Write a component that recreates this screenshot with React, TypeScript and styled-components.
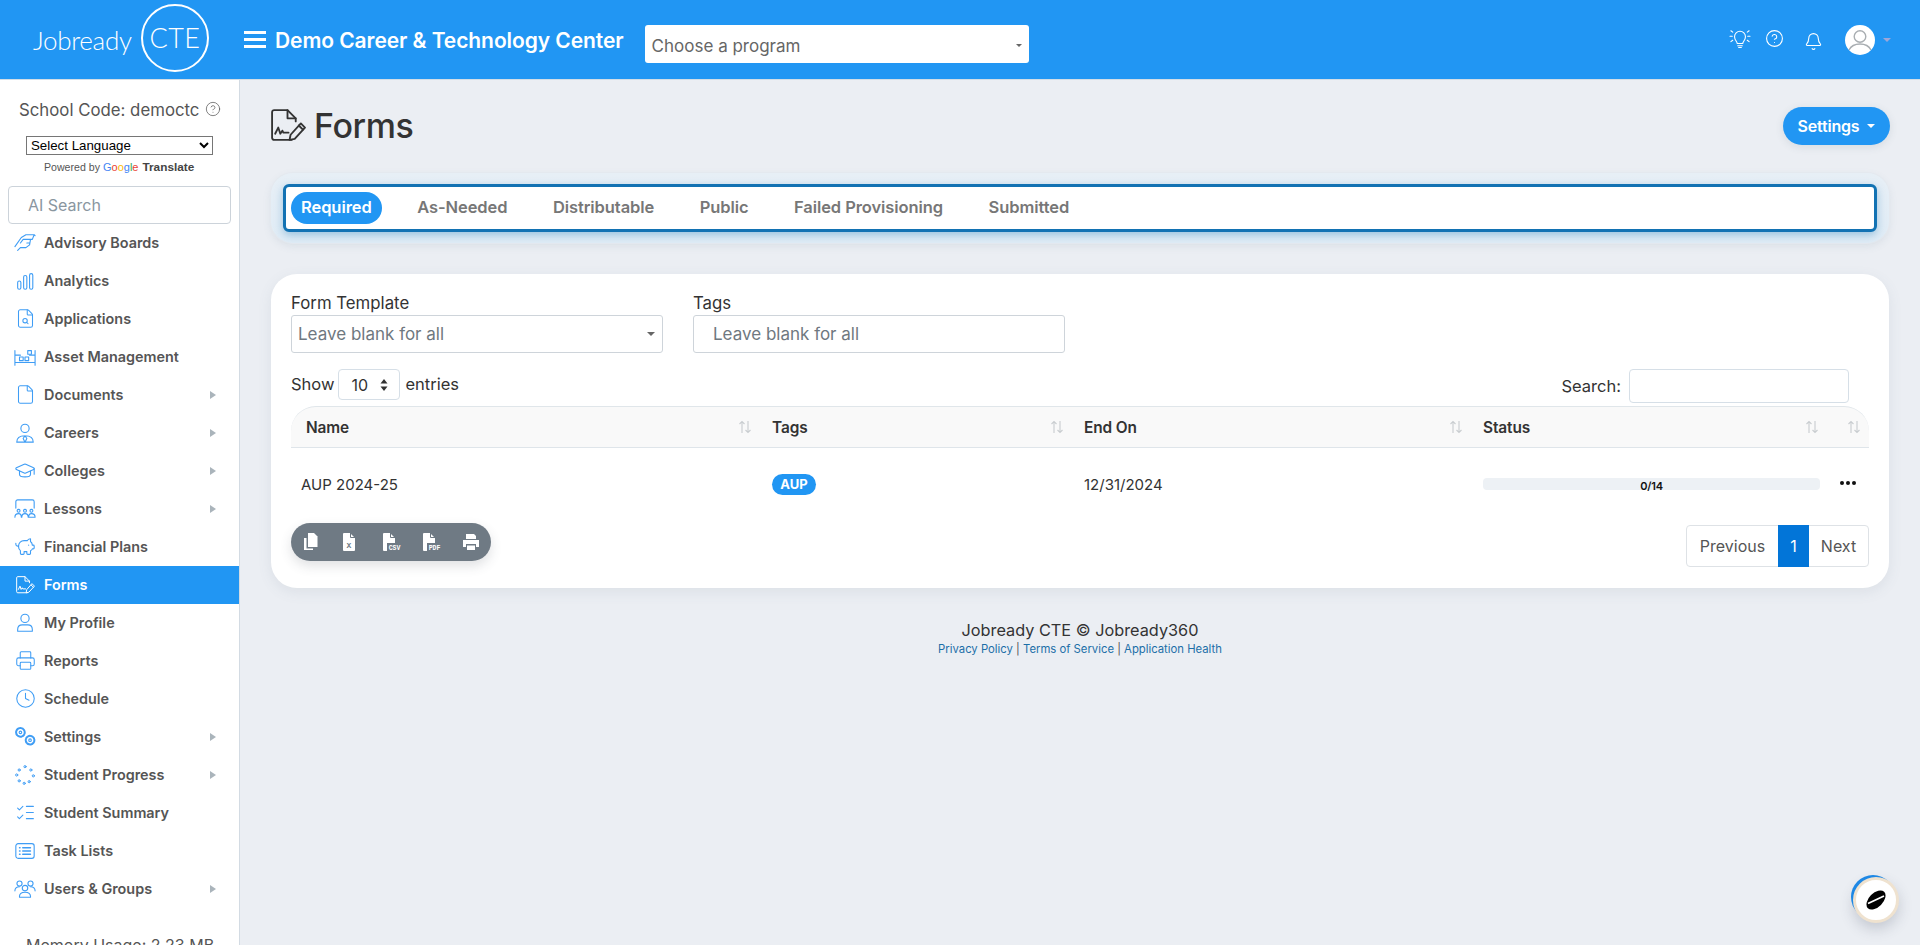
import React from 'react';
import styled, { createGlobalStyle } from 'styled-components';
import { Bell, CircleHelp, Clock, File, GraduationCap, PiggyBank, Printer, ListChecks, FileSearch } from 'lucide-react';

const FONT = '"Inter", "Open Sans", "Liberation Sans", sans-serif';
const BLUE = '#2196f3';
const ICON_BLUE = '#3f9df5';

const Global = createGlobalStyle`
  * { box-sizing: border-box; }
  html, body { margin: 0; height: 945px; overflow: hidden; }
  body { background: #ebeef3; font-family: ${FONT}; color: #333; }
`;

const Header = styled.header`
  height: 80px;
  background: ${BLUE};
  border-bottom: 1px solid #d3dde6;
  display: flex;
  align-items: center;
  padding: 0 29px 0 33px;
`;

const Logo = styled.div`
  display: flex;
  align-items: center;
  justify-content: space-between;
  color: #fff;
  font-family: "Lato", sans-serif;
  font-weight: 300;
  font-size: 26px;
  letter-spacing: -0.3px;
  width: 176px;
`;

const LogoRing = styled.div`
  width: 68px;
  height: 68px;
  flex: none;
  margin-top: -4px;
  border: 2px solid #fff;
  border-radius: 50%;
  display: flex;
  align-items: center;
  justify-content: center;
  font-size: 27px;
  letter-spacing: 0.5px;
`;

const Burger = styled.div`
  width: 22px;
  margin-left: 35px;
  margin-right: 9px;
  display: flex;
  flex-direction: column;
  gap: 4px;
  span { display: block; height: 3px; background: #fff; }
`;

const SchoolTitle = styled.div`
  flex: 0 0 347px;
  color: #fff;
  font-size: 21px;
  font-weight: 600;
  letter-spacing: -0.07px;
  white-space: nowrap;
  margin-top: 2px;
`;

const ProgramSelect = styled.div`
  margin: 8px 0 0 21px;
  width: 384px;
  height: 38px;
  background: #fff;
  border-radius: 3px;
  display: flex;
  align-items: center;
  justify-content: space-between;
  padding: 4px 7px 0 7px;
  color: #666;
  font-size: 17px;
`;

const Caret = styled.i<{ $color?: string; $size?: number }>`
  display: block;
  flex: none;
  width: 0;
  height: 0;
  border-left: ${p => p.$size ?? 4}px solid transparent;
  border-right: ${p => p.$size ?? 4}px solid transparent;
  border-top: ${p => p.$size ?? 4}px solid ${p => p.$color ?? '#666'};
`;

const HeaderTools = styled.div`
  margin-left: auto;
  display: flex;
  align-items: center;
  color: #fff;
`;

const ToolSlot = styled.div<{ $w: number; $dy?: number }>`
  width: ${p => p.$w}px;
  display: flex;
  justify-content: center;
  margin-top: ${p => p.$dy ?? 0}px;
`;

const Avatar = styled.div`
  width: 30px;
  height: 30px;
  border-radius: 50%;
  background: #fff;
  overflow: hidden;
  margin-left: 10px;
  margin-right: 8px;
`;

const Body = styled.div`
  display: flex;
  height: 865px;
`;

const Sidebar = styled.aside`
  width: 240px;
  flex: none;
  background: #fff;
  border-right: 1px solid #d3dbe3;
  overflow: hidden;
`;

const SchoolCode = styled.div`
  height: 56px;
  padding: 16px 0 0 19px;
  display: flex;
  align-items: flex-start;
  gap: 6px;
  color: #555;
  font-size: 16.8px;
  line-height: 28px;
  white-space: nowrap;
  svg { margin-top: 5px; }
`;

const LanguageWrap = styled.div`
  text-align: center;
  font-family: "Liberation Sans", sans-serif;
  select {
    display: block;
    width: 187px;
    height: 19px;
    margin: 0 0 0 26px;
    font-family: "Liberation Sans", sans-serif;
    font-size: 13.3px;
    background: #fff;
    color: #000;
    padding: 0;
  }
`;

const Powered = styled.div`
  margin-top: 4px;
  height: 16px;
  padding-left: 44px;
  display: flex;
  gap: 3px;
  align-items: center;
  font-size: 10.6px;
  color: #555;
  b { color: #444; font-size: 11.8px; margin-left: 1px; }
`;

const G = styled.span<{ $c: string }>`
  color: ${p => p.$c};
  font-weight: 400;
  font-size: 11px;
`;

const AiSearch = styled.div`
  margin: 11px 8px 0 8px;
  height: 38px;
  border: 1px solid #ccd3da;
  border-radius: 4px;
  display: flex;
  align-items: center;
  padding-left: 19px;
  color: #8a969f;
  font-size: 16px;
`;

const NavItem = styled.div<{ $active?: boolean }>`
  height: 38px;
  display: flex;
  align-items: center;
  padding: 0 23px 1px 14px;
  background: ${p => (p.$active ? BLUE : 'transparent')};
  color: ${p => (p.$active ? '#fff' : '#555')};
  font-size: 14.4px;
  font-weight: 600;
  letter-spacing: 0;
`;

const NavIcon = styled.span`
  width: 22px;
  height: 22px;
  margin-right: 8px;
  display: flex;
  align-items: center;
  justify-content: center;
  flex: none;
`;

const SubArrow = styled.i`
  margin-left: auto;
  border-top: 4px solid transparent;
  border-bottom: 4px solid transparent;
  border-left: 6px solid #aab4bb;
`;

const Memory = styled.div`
  margin-top: 27px;
  padding-left: 26px;
  font-size: 16px;
  color: #555;
  white-space: nowrap;
`;

const Main = styled.main`
  flex: 1;
  padding: 0 31px;
`;

const PageHead = styled.div`
  height: 93px;
  display: flex;
  align-items: center;
  justify-content: space-between;
`;

const PageTitle = styled.h1`
  margin: -3px 0 0 -2px;
  display: flex;
  align-items: center;
  gap: 8px;
  font-size: 34px;
  font-weight: 500;
  letter-spacing: -0.4px;
  color: #333;
`;

const SettingsBtn = styled.button`
  width: 107px;
  height: 38px;
  margin: 0 -1px 1px 0;
  border: 0;
  border-radius: 19px;
  background: ${BLUE};
  color: #fff;
  font-family: ${FONT};
  font-size: 16px;
  font-weight: 600;
  letter-spacing: -0.2px;
  display: flex;
  align-items: center;
  justify-content: center;
  gap: 8px;
  box-shadow: 0 2px 8px rgba(60, 80, 100, .12);
`;

const TabsOuter = styled.div`
  height: 70px;
  padding: 11px 12px;
  background: linear-gradient(#e7eff6, #e0ecf6);
  border-radius: 22px;
  box-shadow: 0 0 0 1px #e4e9ef, 0 3px 8px rgba(90, 120, 150, .12);
`;

const TabsInner = styled.div`
  height: 48px;
  background: #fff;
  border: 3px solid #1272b3;
  border-radius: 6px;
  box-shadow: 0 3px 9px rgba(18, 114, 179, .35);
  display: flex;
  align-items: center;
  padding-left: 5px;
  gap: 25.5px;
`;

const Tab = styled.div<{ $active?: boolean }>`
  height: 32px;
  padding: 0 10px 2px;
  border-radius: 16px;
  background: ${p => (p.$active ? BLUE : 'transparent')};
  color: ${p => (p.$active ? '#fff' : '#777')};
  font-size: 16.5px;
  font-weight: 600;
  letter-spacing: -0.08px;
  display: flex;
  align-items: center;
`;

const Card = styled.section`
  margin-top: 31px;
  height: 314px;
  background: #fff;
  border-radius: 26px;
  padding: 18px 20px 0;
  box-shadow: 0 4px 14px rgba(90, 110, 130, .1);
`;

const Filters = styled.div`
  display: flex;
  gap: 30px;
`;

const Field = styled.div`
  width: 372px;
  label {
    display: block;
    height: 23px;
    font-size: 16.8px;
    line-height: 22px;
    color: #333;
  }
`;

const FieldBox = styled.div<{ $indent: number }>`
  height: 38px;
  border: 1px solid #ced4da;
  border-radius: 3px;
  display: flex;
  align-items: center;
  justify-content: space-between;
  padding: 0 7px 0 ${p => p.$indent}px;
  color: #6f7880;
  font-size: 17px;
`;

const Controls = styled.div`
  margin-top: 16px;
  height: 37px;
  display: flex;
  justify-content: space-between;
  align-items: flex-start;
  font-size: 16.5px;
  color: #333;
`;

const ShowEntries = styled.div`
  display: flex;
  align-items: center;
  gap: 4px;
  height: 30px;
`;

const EntrySelect = styled.div`
  width: 62px;
  height: 31px;
  border: 1px solid #d6dfe7;
  border-radius: 4px;
  display: flex;
  align-items: center;
  justify-content: space-between;
  padding: 2px 11px 0 12px;
  margin: 0 1px 0 0;
  font-size: 16px;
`;

const SearchBlock = styled.div`
  display: flex;
  align-items: center;
  gap: 8px;
  margin-right: 20px;
`;

const SearchInput = styled.div`
  width: 220px;
  height: 34px;
  border: 1px solid #d6dfe7;
  border-radius: 4px;
`;

const Table = styled.table`
  width: 1578px;
  table-layout: fixed;
  border-collapse: separate;
  border-spacing: 0;
`;

const Th = styled.th<{ $w: number; $first?: boolean; $last?: boolean }>`
  width: ${p => p.$w}px;
  height: 42px;
  padding: 0 ${p => (p.$last ? 8 : 10)}px 0 ${p => (p.$first ? 15 : 10)}px;
  background: #f9f9f9;
  border-top: 1px solid #e0e6ea;
  border-bottom: 1px solid #dfe5ea;
  border-radius: ${p => (p.$first ? '25px 0 0 0' : p.$last ? '0 25px 0 0' : '0')};
  text-align: left;
  font-size: 15.4px;
  font-weight: 600;
  letter-spacing: -0.1px;
  color: #333;
`;

const ThInner = styled.div`
  display: flex;
  justify-content: space-between;
  align-items: center;
`;

const Td = styled.td`
  height: 75px;
  padding: 0 10px 3px;
  font-size: 15px;
  color: #333;
`;

const Badge = styled.span`
  display: inline-block;
  width: 44px;
  height: 21px;
  line-height: 21px;
  border-radius: 11px;
  background: ${BLUE};
  color: #fff;
  text-align: center;
  font-size: 13px;
  font-weight: 700;
`;

const Progress = styled.div`
  width: 337px;
  height: 12px;
  border-radius: 4px;
  background: #edf1f5;
  color: #111;
  font-size: 11px;
  font-weight: 600;
  line-height: 16px;
  letter-spacing: -0.2px;
  text-align: center;
`;

const Dots = styled.div`
  display: flex;
  gap: 2px;
  justify-content: center;
  margin: -3px 0 0 -3px;
  i { width: 4px; height: 4px; border-radius: 50%; background: #111; }
`;

const BelowTable = styled.div`
  display: flex;
  justify-content: space-between;
  align-items: flex-start;
`;

const ExportBar = styled.div`
  width: 200px;
  height: 38px;
  border-radius: 19px;
  background: #6f7a84;
  box-shadow: 0 5px 12px rgba(60, 70, 80, .16);
  display: flex;
  align-items: center;
`;

const ExportBtn = styled.div`
  width: 40px;
  display: flex;
  justify-content: center;
`;

const Pagination = styled.div`
  margin-top: 2px;
  height: 42px;
  display: flex;
  border: 1px solid #dee2e6;
  border-radius: 4px;
  font-size: 16px;
  color: #555;
`;

const PageCell = styled.div<{ $w: number; $active?: boolean }>`
  width: ${p => p.$w}px;
  display: flex;
  align-items: center;
  justify-content: center;
  margin: ${p => (p.$active ? '-1px 0' : '0')};
  background: ${p => (p.$active ? '#0275d8' : 'transparent')};
  color: ${p => (p.$active ? '#fff' : 'inherit')};
`;

const Footer = styled.footer`
  margin-top: 30px;
  text-align: center;
  font-size: 16.3px;
  color: #333;
  line-height: 24px;
`;

const FooterLinks = styled.div`
  font-size: 11.3px;
  line-height: 14px;
  color: #555;
  a { color: #1c6fa8; text-decoration: none; }
`;

const Launcher = styled.div`
  position: fixed;
  left: 1853px;
  top: 877px;
  width: 46px;
  height: 46px;
  border-radius: 50%;
  background: #fff;
  border: 3px solid #efe2cf;
  display: flex;
  align-items: center;
  justify-content: center;
  box-shadow: -3px -3px 0 -1px #1e88e5, 0 6px 14px rgba(60, 70, 90, .22);
`;

const Svg = ({ children, w = 22, h = 22, vb = '0 0 24 24', sw = 1.2, color = ICON_BLUE }: any) => (
  <svg width={w} height={h} viewBox={vb} fill="none" stroke={color} strokeWidth={sw} strokeLinecap="round" strokeLinejoin="round">
    {children}
  </svg>
);

const FormsIcon = ({ color, size }: { color: string; size: number }) => (
  <svg width={size} height={size} viewBox="0 0 36 36" fill="none" stroke={color} strokeWidth="1.8" strokeLinecap="round" strokeLinejoin="round">
    <path d="M22 32H5a2 2 0 0 1-2-2V5a2 2 0 0 1 2-2h13l8 8v3" />
    <path d="M18 3v8h8" />
    <path d="M6 26l3-6 2 6 2-3 1 2h5" />
    <path d="M21 27l-1 5 5-1 10-11-4-4z" />
    <path d="M29 18l4 4" />
  </svg>
);

const iconAdvisory = <Svg w={23} h={22}><path d="M1 16l7-10M8 6l5-3h9l-2 5h-6M7 12l3-4h8l-1 6-4 3H7l-3 3M14 12h3M22 3l1 1" /></Svg>;
const iconAnalytics = <Svg><rect x="4" y="12" width="3.5" height="9" rx="1.7" /><rect x="10.5" y="6" width="3.5" height="15" rx="1.7" /><rect x="17" y="4" width="3.5" height="17" rx="1.7" /></Svg>;
const iconAsset = <Svg w={23} h={22}><path d="M1 5v16M23 5v16M1 10h6M17 10h6M1 18h22" /><rect x="15" y="5" width="4" height="4" /><rect x="6" y="12" width="4" height="4" /><rect x="12" y="12" width="4" height="4" /></Svg>;
const iconCareers = <Svg><circle cx="12" cy="7" r="4.5" /><path d="M3 22c0-5 3-7 9-7s9 2 9 7zM12 15l-2 3 2 4 2-4z" /></Svg>;
const iconLessons = <Svg w={23} h={22}><path d="M2 11V4a2 2 0 0 1 2-2h16a2 2 0 0 1 2 2v7" /><circle cx="5" cy="14" r="1.6" /><circle cx="12" cy="14" r="1.6" /><circle cx="19" cy="14" r="1.6" /><path d="M1 21c0-3 1.5-4 4-4s3 1 3 4M8.500 21c0-3 1-4 3.500-4s3.500 1 3.500 4M16 21c0-3 1-4 3-4s4 1 4 4z" /></Svg>;
const iconProfile = <Svg><circle cx="12" cy="7" r="4.5" /><path d="M4 21v-2c0-3 2-5 5-5h6c3 0 5 2 5 5v2z" /></Svg>;
const iconGears = <Svg w={23} h={23}><circle cx="7" cy="7.500" r="4.700" strokeDasharray="1.800 1" strokeWidth="2.200" /><circle cx="7" cy="7.500" r="1.400" /><circle cx="17.500" cy="16" r="4.700" strokeDasharray="1.800 1" strokeWidth="2.200" /><circle cx="17.500" cy="16" r="1.400" /></Svg>;
const iconProgress = (
  <Svg w={20} h={20}>
    {[[12, 2], [19, 6], [22, 13], [17, 20], [11, 22], [5, 19], [2, 12], [5, 6]].map(([x, y]) => (
      <circle key={`${x}-${y}`} cx={x} cy={y} r="1.300" />
    ))}
  </Svg>
);
const iconTasks = <Svg w={22} h={22}><rect x="2" y="4" width="20" height="16" rx="2.500" /><path d="M6 8.500h.6M6 12h.6M6 15.500h.6M9.500 8.500H18M9.500 12H18M9.500 15.500H18" strokeWidth="1.500" /></Svg>;
const iconUsers = <Svg w={23} h={22}><circle cx="6" cy="6" r="2.800" /><circle cx="18" cy="6" r="2.800" /><circle cx="12" cy="11" r="3" /><path d="M1 14c0-3 2-4.500 5-4.500M23 14c0-3-2-4.500-5-4.500M6 21v-1c0-3 2.500-4.500 6-4.500s6 1.500 6 4.500v1z" /></Svg>;

const nav = [
  { label: 'Advisory Boards', icon: iconAdvisory },
  { label: 'Analytics', icon: iconAnalytics },
  { label: 'Applications', icon: <FileSearch size={21} color={ICON_BLUE} strokeWidth={1.2} /> },
  { label: 'Asset Management', icon: iconAsset },
  { label: 'Documents', icon: <File size={21} color={ICON_BLUE} strokeWidth={1.2} />, sub: true },
  { label: 'Careers', icon: iconCareers, sub: true },
  { label: 'Colleges', icon: <GraduationCap size={23} color={ICON_BLUE} strokeWidth={1.2} />, sub: true },
  { label: 'Lessons', icon: iconLessons, sub: true },
  { label: 'Financial Plans', icon: <PiggyBank size={22} color={ICON_BLUE} strokeWidth={1.2} /> },
  { label: 'Forms', icon: <FormsIcon color="#fff" size={20} />, active: true },
  { label: 'My Profile', icon: iconProfile },
  { label: 'Reports', icon: <Printer size={21} color={ICON_BLUE} strokeWidth={1.2} /> },
  { label: 'Schedule', icon: <Clock size={21} color={ICON_BLUE} strokeWidth={1.2} /> },
  { label: 'Settings', icon: iconGears, sub: true },
  { label: 'Student Progress', icon: iconProgress, sub: true },
  { label: 'Student Summary', icon: <ListChecks size={21} color={ICON_BLUE} strokeWidth={1.2} /> },
  { label: 'Task Lists', icon: iconTasks },
  { label: 'Users & Groups', icon: iconUsers, sub: true },
];

const tabs = ['Required', 'As-Needed', 'Distributable', 'Public', 'Failed Provisioning', 'Submitted'];

const SortIcon = () => (
  <svg width="14" height="14" viewBox="0 0 14 14" fill="none" stroke="#c9cdd0" strokeWidth="1.1">
    <path d="M4 13V1.500M1.500 4L4 1.500 6.500 4M10 1v11.500M7.500 10l2.500 2.500 2.500-2.500" />
  </svg>
);

const FileGlyph = ({ label }: { label: string }) => {
  const wide = label.length > 1;
  return (
    <svg width="22" height="18" viewBox="0 0 22 18">
      <path d="M4 0h6l5 5v12a1 1 0 0 1-1 1H4a1 1 0 0 1-1-1V1a1 1 0 0 1 1-1z" fill="#fff" />
      <path d="M10.500 0v4.500H15" fill="none" stroke="#6f7a84" strokeWidth="1" />
      {wide && <rect x="7" y="10" width="15" height="8" fill="#6f7a84" />}
      <text
        x={wide ? 14.5 : 9}
        y={wide ? 16.5 : 15}
        textAnchor="middle"
        fontSize={wide ? 6.5 : 8}
        fontWeight="700"
        fontFamily="Liberation Mono, monospace"
        fill={wide ? '#fff' : '#6f7a84'}
      >
        {label}
      </text>
    </svg>
  );
};

const exportIcons = [
  <svg key="copy" width="18" height="18" viewBox="0 0 18 18" fill="#fff"><path d="M6 0h6l3.500 3.500V14H6z" /><path d="M2 5h2.500v10.500H11V17H2z" /></svg>,
  <FileGlyph key="x" label="X" />,
  <FileGlyph key="csv" label="CSV" />,
  <FileGlyph key="pdf" label="PDF" />,
  <svg key="print" width="18" height="18" viewBox="0 0 18 18" fill="#fff"><path d="M4 1h8l2 2v3H4z" /><path d="M1 7h16v7h-3v-3H4v3H1z" /><path d="M5 12.500h8V17H5z" /></svg>,
];

export default function App() {
  return (
    <>
      <Global />
      <Header>
        <Logo>
          Jobready
          <LogoRing>CTE</LogoRing>
        </Logo>
        <Burger><span /><span /><span /></Burger>
        <SchoolTitle>Demo Career &amp; Technology Center</SchoolTitle>
        <ProgramSelect>
          Choose a program
          <Caret $size={3} />
        </ProgramSelect>
        <HeaderTools>
          <ToolSlot $w={34} $dy={-4}>
            <svg width="22" height="20" viewBox="0 0 24 22" fill="none" stroke="#fff" strokeWidth="1.200" strokeLinecap="round">
              <path d="M9 17c0-2-3-3.500-3-7.500a6 6 0 0 1 12 0c0 4-3 5.500-3 7.500zM9.500 19.500h5M10.500 21.500h3" />
              <path d="M1 9h2.500M20.500 9H23M2 3l2 1.500M22 3l-2 1.500M2 15l2-1.500M22 15l-2-1.500" />
            </svg>
          </ToolSlot>
          <ToolSlot $w={34} $dy={-2}><CircleHelp size={19} strokeWidth={1.4} /></ToolSlot>
          <ToolSlot $w={44} $dy={3}><Bell size={19} strokeWidth={1.4} /></ToolSlot>
          <Avatar>
            <svg width="30" height="30" viewBox="0 0 30 30" fill="none" stroke="#a9aeb2" strokeWidth="1.400">
              <circle cx="15" cy="11.500" r="5.800" />
              <path d="M4 25c2-4 6-6 11-6s9 2 11 6" />
            </svg>
          </Avatar>
          <Caret $color="#9ea6d8" $size={4} />
        </HeaderTools>
      </Header>
      <Body>
        <Sidebar>
          <SchoolCode>
            School Code: democtc
            <CircleHelp size={16} strokeWidth={1.1} color="#555" />
          </SchoolCode>
          <LanguageWrap>
            <select defaultValue="">
              <option value="">Select Language</option>
            </select>
            <Powered>
              Powered by
              <span>
                <G $c="#4285f4">G</G><G $c="#ea4335">o</G><G $c="#fbbc05">o</G><G $c="#4285f4">g</G><G $c="#34a853">l</G><G $c="#ea4335">e</G>
              </span>
              <b>Translate</b>
            </Powered>
          </LanguageWrap>
          <AiSearch>AI Search</AiSearch>
          <nav>
            {nav.map(item => (
              <NavItem key={item.label} $active={item.active}>
                <NavIcon>{item.icon}</NavIcon>
                {item.label}
                {item.sub && <SubArrow />}
              </NavItem>
            ))}
          </nav>
          <Memory>Memory Usage: 2.23 MB</Memory>
        </Sidebar>
        <Main>
          <PageHead>
            <PageTitle>
              <FormsIcon color="#333" size={37} />
              Forms
            </PageTitle>
            <SettingsBtn>
              Settings
              <Caret $color="#fff" />
            </SettingsBtn>
          </PageHead>
          <TabsOuter>
            <TabsInner>
              {tabs.map((t, i) => (
                <Tab key={t} $active={i === 0}>{t}</Tab>
              ))}
            </TabsInner>
          </TabsOuter>
          <Card>
            <Filters>
              <Field>
                <label>Form Template</label>
                <FieldBox $indent={6}>Leave blank for all<Caret $size={4} /></FieldBox>
              </Field>
              <Field>
                <label>Tags</label>
                <FieldBox $indent={19}>Leave blank for all</FieldBox>
              </Field>
            </Filters>
            <Controls>
              <ShowEntries>
                Show
                <EntrySelect>
                  10
                  <svg width="8" height="12" viewBox="0 0 8 12" fill="#333"><path d="M4 0l3.500 4.500h-7zM4 12L.5 7.500h7z" /></svg>
                </EntrySelect>
                entries
              </ShowEntries>
              <SearchBlock>
                Search:
                <SearchInput />
              </SearchBlock>
            </Controls>
            <Table>
              <thead>
                <tr>
                  <Th $w={471} $first><ThInner>Name<SortIcon /></ThInner></Th>
                  <Th $w={312}><ThInner>Tags<SortIcon /></ThInner></Th>
                  <Th $w={399}><ThInner>End On<SortIcon /></ThInner></Th>
                  <Th $w={356}><ThInner>Status<SortIcon /></ThInner></Th>
                  <Th $w={40} $last><ThInner><span /><SortIcon /></ThInner></Th>
                </tr>
              </thead>
              <tbody>
                <tr>
                  <Td>AUP 2024-25</Td>
                  <Td><Badge>AUP</Badge></Td>
                  <Td>12/31/2024</Td>
                  <Td><Progress>0/14</Progress></Td>
                  <Td><Dots><i /><i /><i /></Dots></Td>
                </tr>
              </tbody>
            </Table>
            <BelowTable>
              <ExportBar>
                {exportIcons.map(icon => (
                  <ExportBtn key={icon.key}>{icon}</ExportBtn>
                ))}
              </ExportBar>
              <Pagination>
                <PageCell $w={91}>Previous</PageCell>
                <PageCell $w={31} $active>1</PageCell>
                <PageCell $w={59}>Next</PageCell>
              </Pagination>
            </BelowTable>
          </Card>
          <Footer>
            Jobready CTE © Jobready360
            <FooterLinks>
              <a>Privacy Policy</a> | <a>Terms of Service</a> | <a>Application Health</a>
            </FooterLinks>
          </Footer>
        </Main>
      </Body>
      <Launcher>
        <svg width="26" height="26" viewBox="0 0 26 26">
          <ellipse cx="13" cy="13" rx="11.500" ry="7" transform="rotate(-45 13 13)" fill="#000" />
          <path d="M5 16.500L21 9" stroke="#fff" strokeWidth="1.800" fill="none" />
        </svg>
      </Launcher>
    </>
  );
}
